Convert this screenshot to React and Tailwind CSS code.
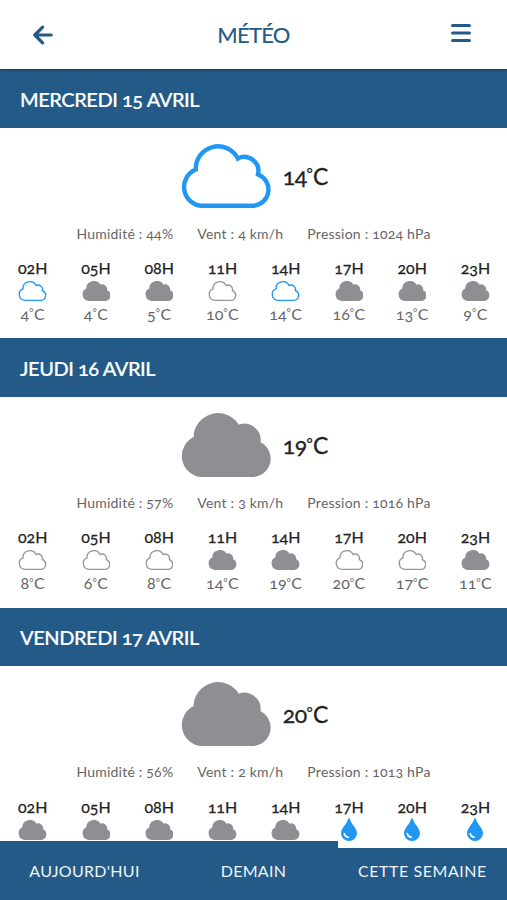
import React from 'react';

const days = [
    {
        title: 'MERCREDI 15 AVRIL',
        icon: 'clear',
        temp: '14',
        humidity: '44%',
        wind: '4 km/h',
        pressure: '1024 hPa',
        hours: [
            ['02H', 'clear', '4'], ['05H', 'cloudy', '4'], ['08H', 'cloudy', '5'], ['11H', 'light', '10'],
            ['14H', 'clear', '14'], ['17H', 'cloudy', '16'], ['20H', 'cloudy', '13'], ['23H', 'cloudy', '9'],
        ],
    },
    {
        title: 'JEUDI 16 AVRIL',
        icon: 'cloudy',
        temp: '19',
        humidity: '57%',
        wind: '3 km/h',
        pressure: '1016 hPa',
        hours: [
            ['02H', 'light', '8'], ['05H', 'light', '6'], ['08H', 'light', '8'], ['11H', 'cloudy', '14'],
            ['14H', 'cloudy', '19'], ['17H', 'light', '20'], ['20H', 'light', '17'], ['23H', 'cloudy', '11'],
        ],
    },
    {
        title: 'VENDREDI 17 AVRIL',
        icon: 'cloudy',
        temp: '20',
        humidity: '56%',
        wind: '2 km/h',
        pressure: '1013 hPa',
        hours: [
            ['02H', 'cloudy'], ['05H', 'cloudy'], ['08H', 'cloudy'], ['11H', 'cloudy'],
            ['14H', 'cloudy'], ['17H', 'rain'], ['20H', 'rain'], ['23H', 'rain'],
        ],
    },
];

const cloudColors = {
    clear: 'fill-none stroke-[#2196f3]',
    light: 'fill-none stroke-[#98989b]',
    cloudy: 'fill-[#8e8e93] stroke-[#8e8e93]',
};

const WeatherIcon = ({ type, className }) => {
    if (type === 'rain') {
        return (
            <svg viewBox="0 0 16 23" className="w-4 h-[23px] shrink-0">
                <path d="M8 0C8.4 0 8.7.5 9 1.4C10.5 6.5 16 10 16 15.2A8 7.8 0 0 1 0 15.2C0 10 5.5 6.5 7 1.4C7.3.5 7.6 0 8 0Z" fill="#2196f3" />
                <path d="M3.2 15.5C3.6 17.8 5 19 7.3 19.3" fill="none" stroke="#fff" strokeWidth="1.5" strokeLinecap="round" />
            </svg>
        );
    }

    return (
        <svg viewBox="0 0 91 64" className={`${className} ${cloudColors[type]} shrink-0`}>
            <path
                d="M21 61.8A18.9 18.9 0 0 1 15.8 25.5A22.2 22.2 0 0 1 57.8 14.5A14.2 14.2 0 0 1 78 30.5A16.2 16.2 0 0 1 73.5 61.8Z"
                strokeWidth="4.4"
            />
        </svg>
    );
};

// small degree sign tucked between the number and the C
const Temp = ({ value, className }) => (
    <span className={className}>
        {value}<span className="text-[0.65em] align-[0.36em] leading-none mr-[0.04em]">°</span>C
    </span>
);

const Day = ({ day }) => (
    <section className="h-[269.3px] shrink-0">
        <h2 className="h-[58.7px] bg-[#235a87] text-white text-[20px] pl-5 pt-px flex items-center tracking-[-0.45px] font-medium [-webkit-text-stroke:0.2px]">
            {day.title}
        </h2>
        <div className="flex justify-center items-center gap-[11.5px] pl-px mt-4 h-16">
            <WeatherIcon type={day.icon} className="w-[91px] h-16" />
            <Temp value={day.temp} className="text-[23px] leading-8 text-[#222] tracking-[-0.5px] [-webkit-text-stroke:0.3px]" />
        </div>
        <div className="flex justify-center gap-6 mt-4 text-sm leading-5 tracking-[0.22px] text-[#656568]">
            <span>Humidité : {day.humidity}</span>
            <span>Vent : {day.wind}</span>
            <span>Pression : {day.pressure}</span>
        </div>
        <div className="grid grid-cols-8 mt-[14.5px] pl-px">
            {day.hours.map(([hour, type, temp]) => (
                <div key={hour} className="flex flex-col items-center">
                    <span className="text-[16px] leading-5 text-[#222] [-webkit-text-stroke:0.25px]">{hour}</span>
                    <div className="h-[22px] mt-0.5 flex items-center">
                        <WeatherIcon type={type} className="w-[28.5px] h-5" />
                    </div>
                    {temp && <Temp value={temp} className="text-base leading-[23px] text-[#656568]" />}
                </div>
            ))}
        </div>
    </section>
);

const App = () => {
    return (
        <div className="w-full h-[900px] flex flex-col bg-white overflow-hidden font-[Lato,sans-serif] oldstyle-nums">
            <header className="h-[69px] shrink-0 grid grid-cols-3 items-center text-[#235a87] relative z-10 shadow-[0_1px_2px_rgba(0,0,0,0.4)]">
                <svg viewBox="0 0 20 20" className="w-5 h-5 ml-[32.5px]" fill="none" stroke="currentColor" strokeWidth="3.2" strokeLinecap="round" strokeLinejoin="round">
                    <path d="M18.2 10H2M9.6 2.2L1.8 10L9.6 17.8" />
                </svg>
                <h1 className="text-[22px] text-center tracking-[-0.7px] [-webkit-text-stroke:0.15px]">MÉTÉO</h1>
                <svg viewBox="0 0 20 20" className="w-5 h-5 justify-self-end mr-[36.5px] -mt-[3px]" fill="none" stroke="currentColor" strokeWidth="3.2" strokeLinecap="round">
                    <path d="M1.6 2.5H18.4M1.6 10H18.4M1.6 17.5H18.4" />
                </svg>
            </header>
            <main className="h-[772px] shrink-0 overflow-hidden">
                {days.map((day) => <Day key={day.title} day={day} />)}
            </main>
            <nav className="h-[59px] shrink-0 grid grid-cols-3 text-center text-base leading-[60px] tracking-[0.3px] text-[#eef4fa] bg-[#235a87]">
                <span>AUJOURD'HUI</span>
                <span>DEMAIN</span>
                <span className="border-t-[7px] border-white leading-[46px] tracking-[0.55px]">CETTE SEMAINE</span>
            </nav>
        </div>
    );
};

export default App;
